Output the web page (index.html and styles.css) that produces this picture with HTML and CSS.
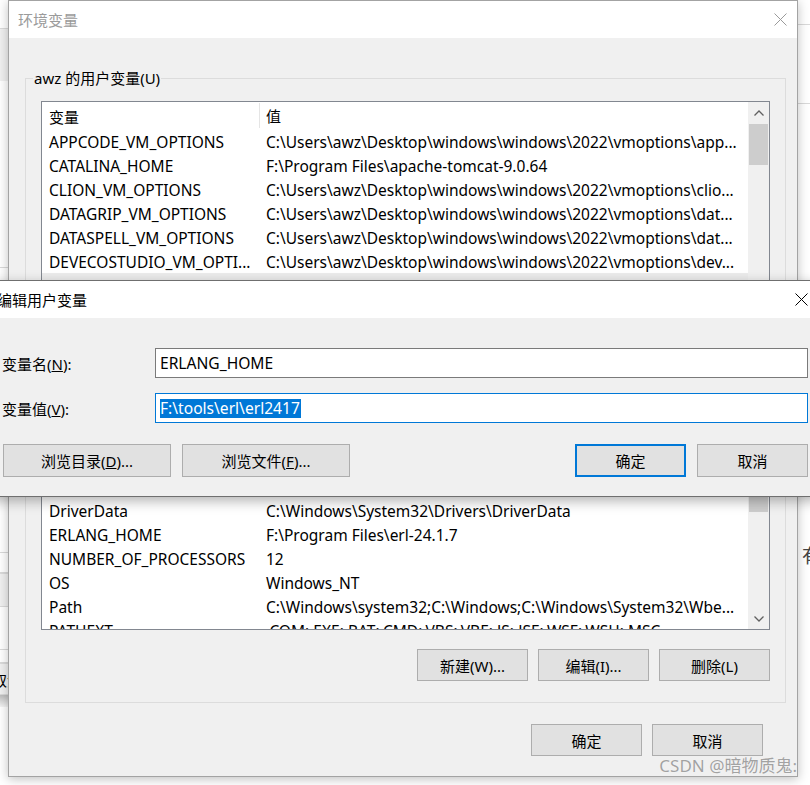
FILE: index.html
```html
<!DOCTYPE html>
<html lang="zh-CN">
<head>
  <meta charset="UTF-8">
  <title>环境变量</title>
  <link rel="stylesheet" href="styles.css">
</head>
<body>
<div class="desktop">

  <!-- window behind the dialogs, only its edges show -->
  <div class="back-window">
    <div class="back-left">
      <div class="strip h28"></div>
      <div class="strip gray h53"></div>
      <div class="strip line h187"></div>
      <div class="strip line h285"></div>
      <div class="strip line h20"></div>
      <div class="strip gray line h34"></div>
      <div class="strip line h43"></div>
      <div class="strip line h13"></div>
      <div class="strip gray line h32"><span class="back-text">取消</span></div>
      <div class="strip shade h12"></div>
    </div>
    <div class="back-right">
      <div class="strip line h25"></div>
      <div class="strip line h79"></div>
      <div class="strip h440"></div>
      <div class="back-char">有</div>
    </div>
  </div>

  <!-- 环境变量 -->
  <div class="dialog env-dialog">
    <div class="titlebar inactive">
      <span class="title">环境变量</span>
      <svg class="close-icon" width="13" height="13" viewBox="0 0 13 13">
        <path d="M0.5 0.5 L12.5 12.5 M12.5 0.5 L0.5 12.5" stroke="#9a9a9a" stroke-width="1" fill="none"/>
      </svg>
    </div>
    <div class="dialog-body">
      <fieldset class="group">
        <legend>awz 的用户变量(U)</legend>
        <div class="list">
          <div class="list-cols">
            <div class="list-header">
              <div class="cell name">变量</div>
              <div class="cell value">值</div>
            </div>
            <div class="row"><div class="cell name">APPCODE_VM_OPTIONS</div><div class="cell value">C:\Users\awz\Desktop\windows\windows\2022\vmoptions\app...</div></div>
            <div class="row"><div class="cell name">CATALINA_HOME</div><div class="cell value">F:\Program Files\apache-tomcat-9.0.64</div></div>
            <div class="row"><div class="cell name">CLION_VM_OPTIONS</div><div class="cell value">C:\Users\awz\Desktop\windows\windows\2022\vmoptions\clio...</div></div>
            <div class="row"><div class="cell name">DATAGRIP_VM_OPTIONS</div><div class="cell value">C:\Users\awz\Desktop\windows\windows\2022\vmoptions\dat...</div></div>
            <div class="row"><div class="cell name">DATASPELL_VM_OPTIONS</div><div class="cell value">C:\Users\awz\Desktop\windows\windows\2022\vmoptions\dat...</div></div>
            <div class="row"><div class="cell name">DEVECOSTUDIO_VM_OPTI...</div><div class="cell value">C:\Users\awz\Desktop\windows\windows\2022\vmoptions\dev...</div></div>
            <div class="row hover"><div class="cell name">ERLANG_HOME</div><div class="cell value">F:\tools\erl\erl2417</div></div>
            <!-- rows hidden under the edit dialog -->
            <div class="rows-covered"></div>
            <div class="row"><div class="cell name">DriverData</div><div class="cell value">C:\Windows\System32\Drivers\DriverData</div></div>
            <div class="row"><div class="cell name">ERLANG_HOME</div><div class="cell value">F:\Program Files\erl-24.1.7</div></div>
            <div class="row"><div class="cell name">NUMBER_OF_PROCESSORS</div><div class="cell value">12</div></div>
            <div class="row"><div class="cell name">OS</div><div class="cell value">Windows_NT</div></div>
            <div class="row"><div class="cell name">Path</div><div class="cell value">C:\Windows\system32;C:\Windows;C:\Windows\System32\Wbe...</div></div>
            <div class="row"><div class="cell name">PATHEXT</div><div class="cell value">.COM;.EXE;.BAT;.CMD;.VBS;.VBE;.JS;.JSE;.WSF;.WSH;.MSC</div></div>
          </div>
          <div class="scrollbar">
            <div class="sb-btn">
              <svg width="10" height="6" viewBox="0 0 10 6"><path d="M0.5 5.5 L5 1 L9.5 5.5" stroke="#606060" stroke-width="1.3" fill="none"/></svg>
            </div>
            <div class="sb-thumb top"></div>
            <div class="sb-track"></div>
            <div class="sb-thumb lower"></div>
            <div class="sb-track bottom"></div>
            <div class="sb-btn">
              <svg width="10" height="6" viewBox="0 0 10 6"><path d="M0.5 0.5 L5 5 L9.5 0.5" stroke="#606060" stroke-width="1.3" fill="none"/></svg>
            </div>
          </div>
        </div>
        <div class="button-row">
          <button class="win-btn">新建(W)...</button>
          <button class="win-btn">编辑(I)...</button>
          <button class="win-btn">删除(L)</button>
        </div>
      </fieldset>
      <div class="button-row footer">
        <button class="win-btn">确定</button>
        <button class="win-btn">取消</button>
      </div>
    </div>
  </div>

  <!-- 编辑用户变量 -->
  <div class="dialog edit-dialog">
    <div class="titlebar">
      <span class="title">编辑用户变量</span>
      <svg class="close-icon" width="13" height="13" viewBox="0 0 13 13">
        <path d="M0.5 0.5 L12.5 12.5 M12.5 0.5 L0.5 12.5" stroke="#000" stroke-width="1" fill="none"/>
      </svg>
    </div>
    <div class="edit-body">
      <div class="field">
        <label>变量名(<u>N</u>):</label>
        <div class="text-box">ERLANG_HOME</div>
      </div>
      <div class="field">
        <label>变量值(<u>V</u>):</label>
        <div class="text-box focused"><span class="selected-text">F:\tools\erl\erl2417</span></div>
      </div>
      <div class="edit-buttons">
        <button class="win-btn wide">浏览目录(<u>D</u>)...</button>
        <button class="win-btn wide">浏览文件(<u>F</u>)...</button>
        <span class="spacer"></span>
        <button class="win-btn default">确定</button>
        <button class="win-btn">取消</button>
      </div>
    </div>
  </div>

  <div class="watermark">CSDN @暗物质鬼:</div>
</div>
</body>
</html>
```

FILE: styles.css
```css
* {
  box-sizing: border-box;
}

body {
  margin: 0;
  font-family: "Noto Sans", "Noto Sans CJK SC", sans-serif;
  font-size: 15px;
  color: #000;
  background: #fff;
}

.desktop {
  position: relative;
  width: 810px;
  height: 785px;
  overflow: hidden;
  background: #fff;
}

/* background window */
.back-window {
  position: absolute;
  inset: 0;
  display: flex;
  justify-content: space-between;
}

.back-left {
  width: 8px;
  display: flex;
  flex-direction: column;
}

.back-right {
  width: 13px;
  display: flex;
  flex-direction: column;
}

.strip {
  flex: none;
  overflow: hidden;
  white-space: nowrap;
}

.strip.gray { background: #f0f0f0; border-top: 1px solid #dadada; }
.strip.line { border-bottom: 1px solid #d9d9d9; }
.strip.shade { background: linear-gradient(#bdbdbd, #f4f4f4); }

.h12 { height: 12px; }
.h13 { height: 13px; }
.h20 { height: 20px; }
.h25 { height: 25px; }
.h28 { height: 28px; }
.h32 { height: 32px; }
.h34 { height: 34px; }
.h43 { height: 43px; }
.h53 { height: 53px; }
.h79 { height: 79px; }
.h187 { height: 187px; }
.h285 { height: 285px; }
.h440 { height: 440px; }

.back-text {
  display: block;
  margin-left: -8px;
  line-height: 32px;
}

.back-char {
  padding-left: 5px;
  font-size: 19px;
  line-height: 24px;
  color: #444;
  white-space: nowrap;
}

/* dialogs */
.dialog {
  position: absolute;
  display: flex;
  flex-direction: column;
  background: #f0f0f0;
}

.env-dialog {
  left: 8px;
  top: 0;
  width: 790px;
  height: 777px;
  border: 1px solid #a3a3a3;
  box-shadow: 0 2px 10px rgba(0, 0, 0, 0.25);
}

.titlebar {
  height: 37px;
  flex: none;
  display: flex;
  align-items: center;
  justify-content: space-between;
  background: #fff;
  padding: 0 10px 0 9px;
}

.titlebar .title {
  font-size: 15px;
}

.titlebar.inactive .title {
  color: #9b9b9b;
}

.close-icon {
  display: block;
}

.dialog-body {
  flex: 1;
  display: flex;
  flex-direction: column;
}

.group {
  margin: 30px 11px 0 16px;
  padding: 13px 15px 21px 7px;
  border: 1px solid #dcdcdc;
  min-width: 0;
}

.group legend {
  padding: 0 1px;
  line-height: 20px;
}

.list {
  margin-left: 8px;
  height: 529px;
  border: 1px solid #828790;
  background: #fff;
  display: flex;
  font-size: 15.5px;
}

.list-cols {
  flex: 1;
  min-width: 0;
  overflow: hidden;
}

.list-header {
  display: flex;
  height: 27px;
  align-items: center;
}

.list-header .cell.name {
  border-right: 1px solid #e5e5e5;
  height: 25px;
}

.list-header .cell {
  font-size: 15px;
  line-height: 27px;
  padding-top: 1px;
}

.row {
  display: flex;
  height: 24px;
}

.row .cell {
  line-height: 22px;
  padding-top: 2px;
}

.row.hover {
  background: #ececec;
}

.cell {
  white-space: nowrap;
  overflow: hidden;
}

.cell.name {
  width: 218px;
  flex: none;
  padding-left: 7px;
}

.cell.value {
  flex: 1;
  padding-left: 6px;
}

.rows-covered {
  height: 201px;
}

.scrollbar {
  width: 21px;
  flex: none;
  background: #f0f0f0;
  display: flex;
  flex-direction: column;
}

.sb-btn {
  height: 21px;
  flex: none;
  display: flex;
  align-items: center;
  justify-content: center;
}

.sb-thumb {
  flex: none;
  background: #cdcdcd;
  margin: 0 1px;
}

.sb-thumb.top {
  height: 41px;
  margin-top: 1px;
}

.sb-thumb.lower {
  height: 43px;
}

.sb-track {
  flex: 1;
}

.sb-track.bottom {
  flex: none;
  height: 96px;
}

.button-row {
  display: flex;
  justify-content: flex-end;
  gap: 10px;
  margin-top: 19px;
}

.button-row.footer {
  margin: 21px 34px 0 0;
}

.win-btn {
  width: 111px;
  height: 32px;
  padding: 0;
  font-family: inherit;
  font-size: 15px;
  color: #000;
  background: #e1e1e1;
  border: 1px solid #adadad;
}

.win-btn u {
  text-decoration-thickness: 1px;
}

/* edit dialog */
.edit-dialog {
  left: -12px;
  top: 280px;
  width: 832px;
  height: 217px;
  border: 1px solid #6f6f6f;
  box-shadow: 0 4px 12px rgba(0, 0, 0, 0.3);
}

.edit-dialog .titlebar {
  padding: 0 11px 0 8px;
}

.edit-body {
  flex: 1;
  padding: 30px 11px 0 13px;
}

.field {
  display: flex;
  align-items: center;
  margin-bottom: 15px;
}

.field label {
  width: 153px;
  flex: none;
}

.text-box {
  flex: 1;
  height: 30px;
  line-height: 28px;
  padding-left: 4px;
  font-size: 15.6px;
  background: #fff;
  border: 1px solid #7a7a7a;
  white-space: nowrap;
}

.text-box.focused {
  border-color: #0078d7;
}

.selected-text {
  display: inline-block;
  line-height: 19px;
  padding-right: 1px;
  color: #fff;
  background: #0078d7;
}

.edit-buttons {
  display: flex;
  gap: 11px;
  margin-top: 21px;
  margin-left: 1px;
}

.edit-buttons .win-btn {
  height: 33px;
}

.edit-buttons .win-btn.wide {
  width: 168px;
}

.edit-buttons .win-btn.default {
  width: 111px;
  border: 2px solid #0078d7;
}

.spacer {
  flex: 1;
}

.watermark {
  position: absolute;
  right: 13px;
  bottom: 8px;
  font-size: 17px;
  color: #a2a2a2;
  text-shadow: 0 0 1px #fff;
  white-space: nowrap;
}
```
